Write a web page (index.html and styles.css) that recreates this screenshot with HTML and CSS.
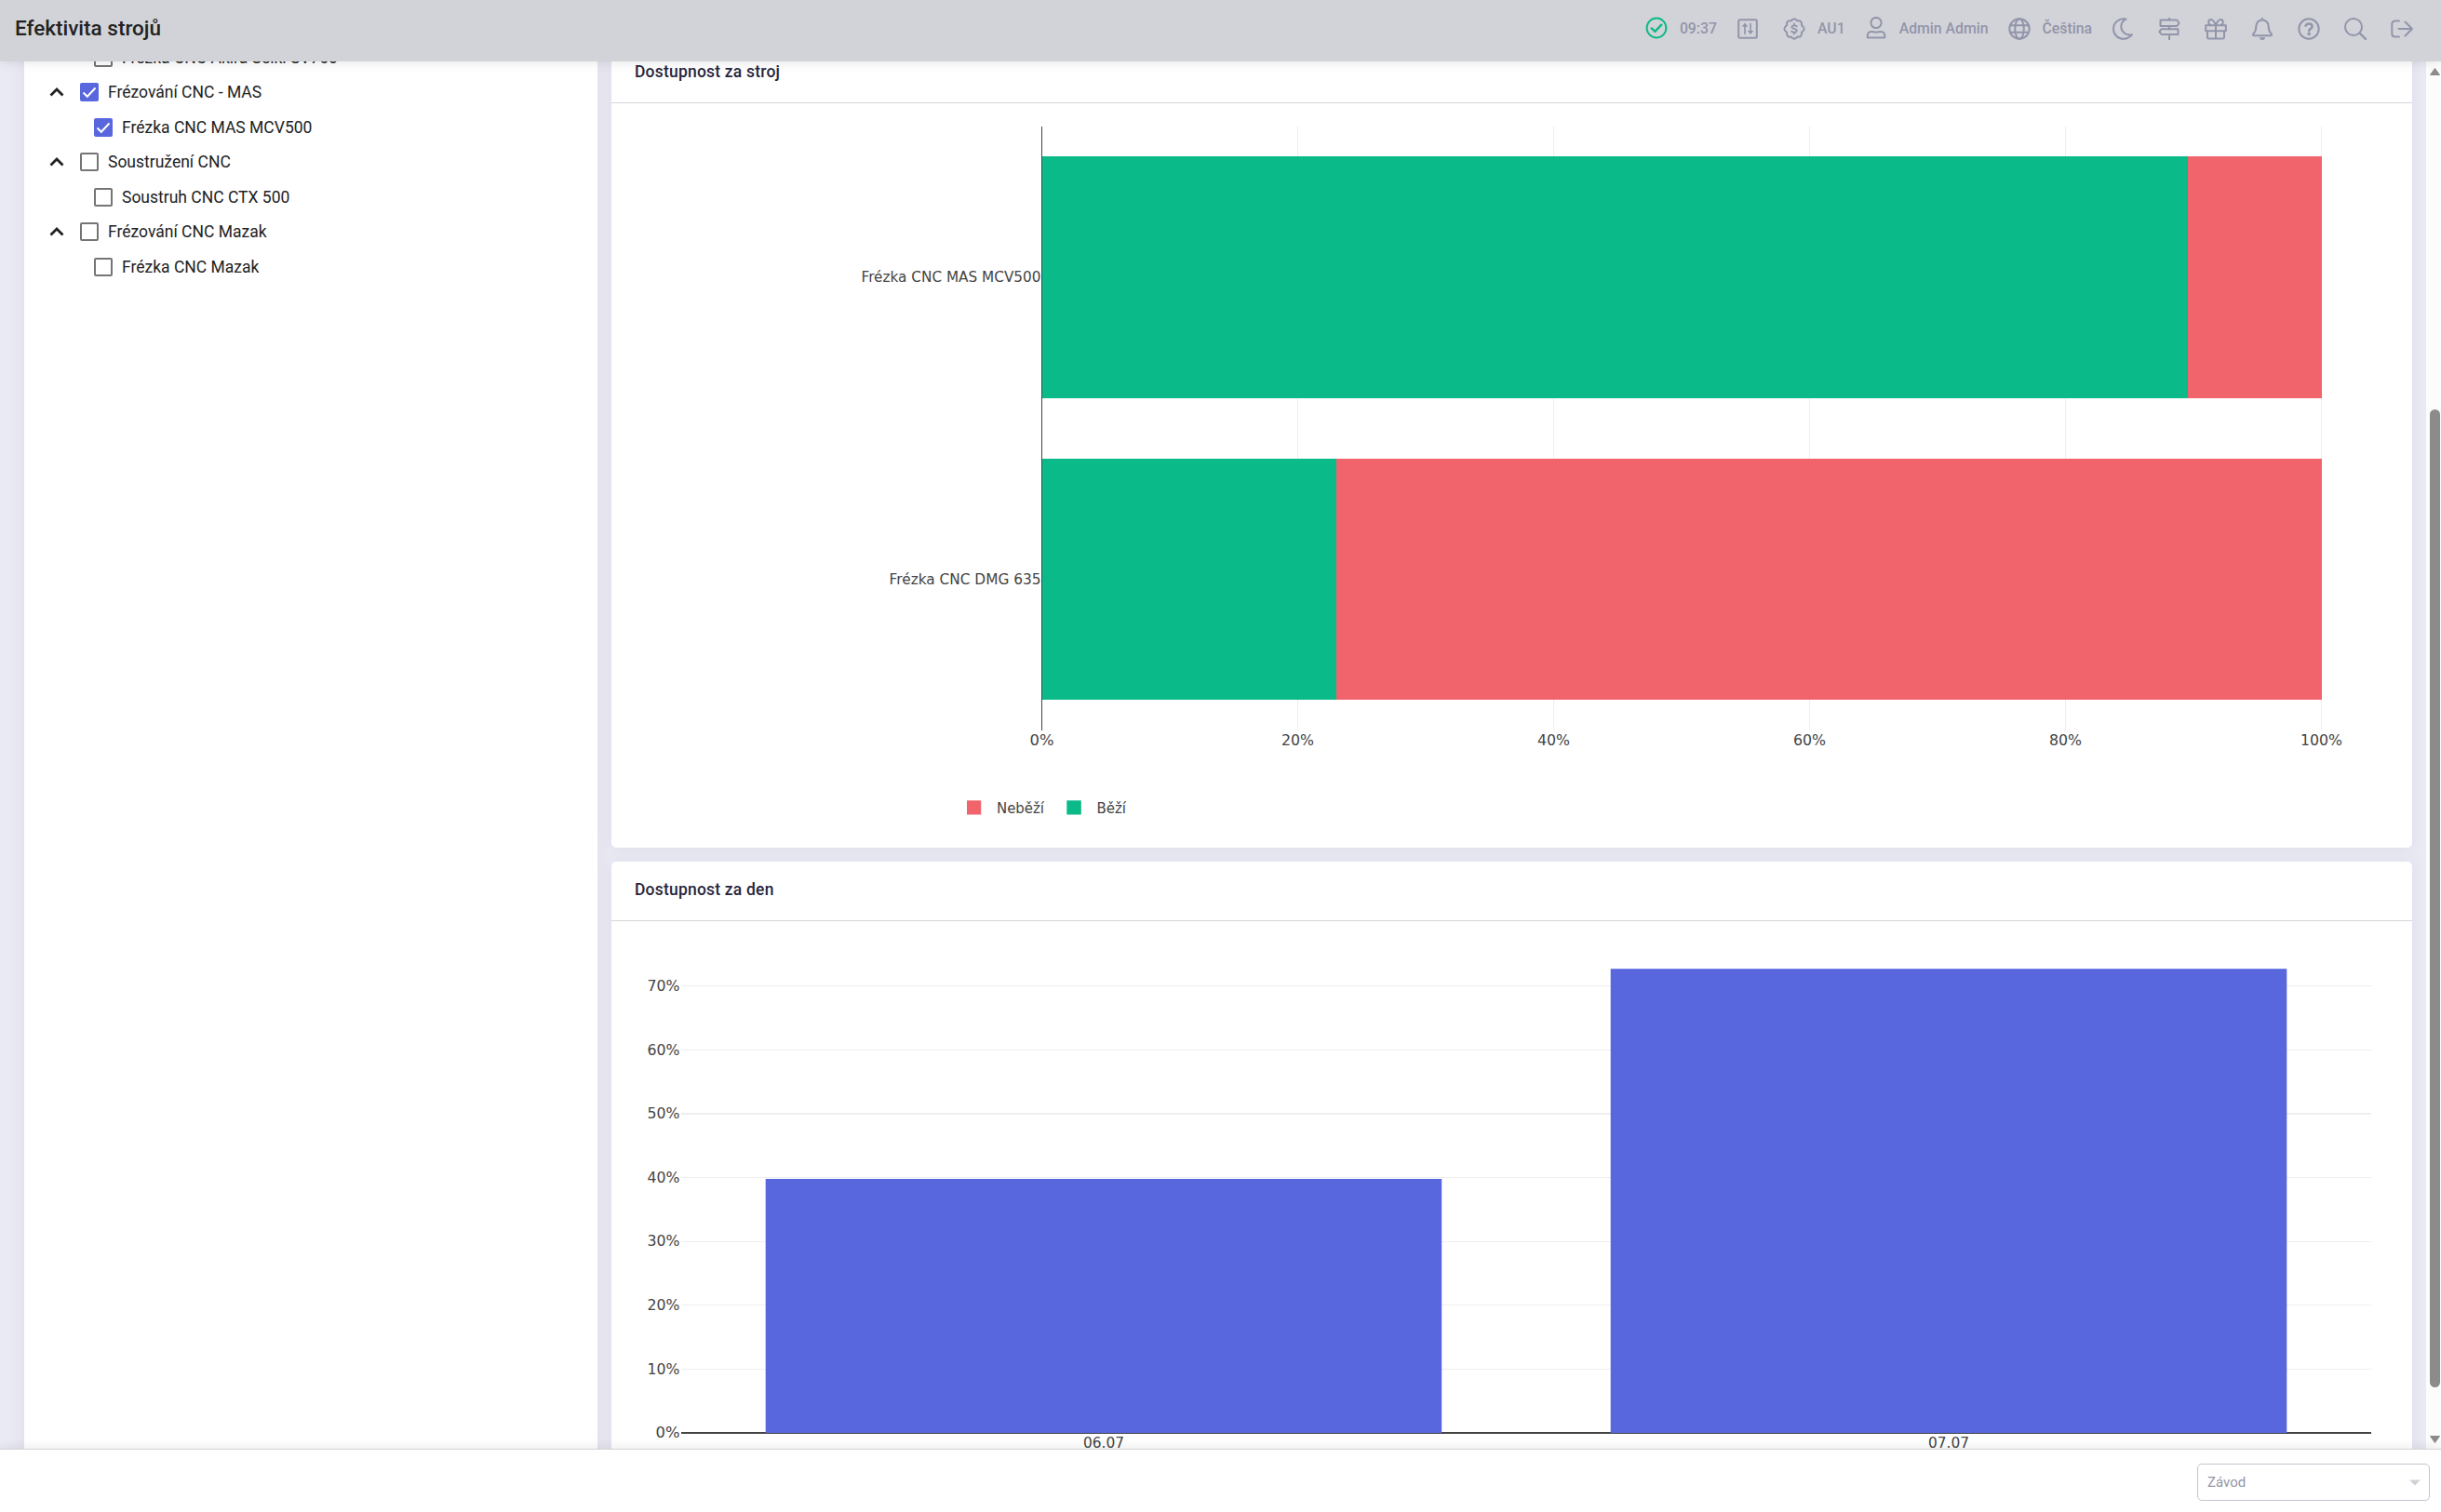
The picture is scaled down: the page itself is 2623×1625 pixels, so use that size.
FILE: index.html
```html
<!DOCTYPE html>
<html lang="cs">
<head>
    <meta charset="UTF-8">
    <meta name="viewport" content="width=device-width, initial-scale=1.0">
    <title>Efektivita strojů</title>
    <link rel="stylesheet" href="styles.css">
</head>
<body>
    <header class="topbar">
        <h1>Efektivita strojů</h1>
        <nav class="toolbar">
            <div class="tool">
                <svg class="icon ok" viewBox="0 0 24 24"><circle cx="12" cy="12" r="10.4"/><path d="M6.8 12.4l3.6 3.5 6.9-7.2" stroke-width="2.4"/></svg>
                <span>09:37</span>
            </div>
            <div class="tool">
                <svg class="icon" viewBox="0 0 24 24"><rect x="2.2" y="2.2" width="19.6" height="19.6" rx="1.5"/><path d="M9 17.500V8M15 6.500v9" stroke-width="1.600"/><path class="solid" d="M9 5.500l3.300 4.200H5.700zM15 18l-3.300-4h6.600z"/></svg>
            </div>
            <div class="tool">
                <svg class="icon" viewBox="0 0 24 24"><path d="M12 1.3c1.6 0 2.5 1 3.2 2.1 1.3-.3 2.8-.3 3.9.8s1.1 2.6.8 3.9C21 8.8 22.7 10.200 22.7 12s-1.600 3-2.800 3.800c.3 1.400.3 2.800-.8 3.900s-2.600 1.100-3.900.8C14.500 21.600 13.600 22.700 12 22.700s-2.500-1-3.200-2.200c-1.300.3-2.800.3-3.900-.8s-1.100-2.500-.8-3.900C2.900 15 1.300 13.800 1.300 12S3 8.800 4.100 8.100c-.3-1.300-.3-2.800.8-3.900s2.600-1.100 3.900-.8C9.500 2.300 10.400 1.300 12 1.300z"/><path d="M14.700 9.200c-.8-.7-1.700-.9-2.700-.9-1.500 0-2.600.6-2.600 1.800 0 2.600 5.300 1.100 5.300 3.800 0 1.200-1.200 1.800-2.700 1.800-1.100 0-2.100-.3-2.900-1M12 6.400v1.900M12 15.700v1.900" stroke-width="1.800"/></svg>
                <span>AU1</span>
            </div>
            <div class="tool">
                <svg class="icon user" viewBox="0 0 24 24"><circle cx="12" cy="6.500" r="5.600"/><path d="M2.700 21.900v-1.600c0-2.700 2.200-4.400 4.600-4.400 1.600 0 2.400.8 4.700.8s3.100-.8 4.700-.8c2.400 0 4.600 1.700 4.600 4.400v1.600c0 .4-.3.700-.7.700H3.400c-.4 0-.7-.3-.7-.7z"/></svg>
                <span>Admin Admin</span>
            </div>
            <div class="tool">
                <svg class="icon" viewBox="0 0 24 24"><circle cx="12" cy="12" r="10.700"/><ellipse cx="12" cy="12" rx="4.800" ry="10.700"/><path d="M2 8.200h20M2 15.800h20"/></svg>
                <span>Čeština</span>
            </div>
            <div class="tool"><svg class="icon" viewBox="0 0 24 24"><path d="M15.500 1.500C9 .2 2 4.600 2 12c0 6.200 4.900 10.800 10.800 10.800 3.700 0 7-1.700 9.200-4.600-6.800 1.300-11.700-3-11.700-8.600 0-3.300 1.800-6.200 5.200-8.100z"/></svg></div>
            <div class="tool"><svg class="icon" viewBox="0 0 24 24"><path d="M12 .5v2M12 9.500v3M12 18.500V24"/><path d="M2.500 2.500h17.800l2.300 3.300-2.300 3.200H2.500zM21.500 12.200H3.700l-2.300 2.900 2.300 2.900h17.800z"/></svg></div>
            <div class="tool"><svg class="icon" viewBox="0 0 24 24"><path d="M3 14.500v6.700c0 .7.500 1.300 1.300 1.300h15.400c.8 0 1.300-.6 1.300-1.300v-6.700M1.200 8.200h21.600v6H1.200zM12 8.200v14.300M12 8C10.500 4.500 9.300 2 7 2 5.300 2 4.200 3.200 4.200 4.800S5.300 8 7 8M12 8c1.500-3.500 2.700-6 5-6 1.700 0 2.800 1.200 2.800 2.800S18.700 8 17 8"/></svg></div>
            <div class="tool"><svg class="icon" viewBox="0 0 24 24"><path d="M12 .3v2.200M12 2.500c-4 0-6.700 3-6.700 6.900 0 5-1.300 6.300-3 8-.7.800-.3 1.900.8 1.900h17.800c1.100 0 1.500-1.100.8-1.900-1.700-1.700-3-3-3-8 0-3.900-2.700-6.900-6.700-6.900z"/><path class="solid" d="M8.900 21.200h6.200c0 1.600-1.300 2.800-3.100 2.800s-3.100-1.200-3.100-2.800z"/></svg></div>
            <div class="tool"><svg class="icon" viewBox="0 0 24 24"><circle cx="12" cy="12" r="10.700"/><path d="M8.500 8.700c.6-1.500 1.800-2.300 3.500-2.300 2.100 0 3.600 1.300 3.600 3 0 2.600-3.400 2.400-3.400 4.800" stroke-width="2.500"/><circle class="solid" cx="12.100" cy="17.500" r="1.800"/></svg></div>
            <div class="tool"><svg class="icon" viewBox="0 0 24 24"><circle cx="10" cy="10" r="9"/><path d="M16.500 16.500l6.500 6.500" stroke-width="2.300"/></svg></div>
            <div class="tool"><svg class="icon" viewBox="0 0 24 24"><path d="M9 20.500H4.500c-1.800 0-3.200-1.400-3.200-3.200V6.700c0-1.800 1.400-3.200 3.200-3.200H9M8.500 12h14.300M15.500 4.500L23 12l-7.500 7.500"/></svg></div>
        </nav>
    </header>

    <main class="content">
        <aside class="tree">
            <div class="row child"><span class="check"></span>Frézka CNC Akira Seiki SV760</div>
            <div class="row"><svg class="chevron" viewBox="0 0 16 10"><path d="M1.500 8.500L8 2l6.500 6.500"/></svg><span class="check checked"><svg viewBox="0 0 20 20"><path d="M3.500 10.500l4.300 4.200L16.500 5.500"/></svg></span>Frézování CNC - MAS</div>
            <div class="row child"><span class="check checked"><svg viewBox="0 0 20 20"><path d="M3.500 10.500l4.300 4.200L16.500 5.500"/></svg></span>Frézka CNC MAS MCV500</div>
            <div class="row"><svg class="chevron" viewBox="0 0 16 10"><path d="M1.500 8.500L8 2l6.500 6.500"/></svg><span class="check"></span>Soustružení CNC</div>
            <div class="row child"><span class="check"></span>Soustruh CNC CTX 500</div>
            <div class="row"><svg class="chevron" viewBox="0 0 16 10"><path d="M1.500 8.500L8 2l6.500 6.500"/></svg><span class="check"></span>Frézování CNC Mazak</div>
            <div class="row child"><span class="check"></span>Frézka CNC Mazak</div>
        </aside>

        <div class="cards">
            <section class="card">
                <h2>Dostupnost za stroj</h2>
                <svg class="chart" width="1935" height="800" viewBox="657 111 1935 800">
                    <g class="grid">
                        <path d="M1394.500 136v649M1669.500 136v649M1944.500 136v649M2219.500 136v649M2494.500 136v649"/>
                    </g>
                    <g class="running">
                        <rect x="1120" y="168" width="1231" height="260"/>
                        <rect x="1120" y="493" width="316" height="259"/>
                    </g>
                    <g class="stopped">
                        <rect x="2351" y="168" width="144" height="260"/>
                        <rect x="1436" y="493" width="1059" height="259"/>
                    </g>
                    <path class="axis" d="M1119.500 136v649"/>
                    <g class="label end">
                        <text x="1118.500" y="303" textLength="193" lengthAdjust="spacingAndGlyphs">Frézka CNC MAS MCV500</text>
                        <text x="1118.500" y="628" textLength="163" lengthAdjust="spacingAndGlyphs">Frézka CNC DMG 635</text>
                    </g>
                    <g class="label middle">
                        <text x="1119.500" y="801" textLength="26" lengthAdjust="spacingAndGlyphs">0%</text>
                        <text x="1394.500" y="801" textLength="35" lengthAdjust="spacingAndGlyphs">20%</text>
                        <text x="1669.500" y="801" textLength="35" lengthAdjust="spacingAndGlyphs">40%</text>
                        <text x="1944.500" y="801" textLength="35" lengthAdjust="spacingAndGlyphs">60%</text>
                        <text x="2219.500" y="801" textLength="35" lengthAdjust="spacingAndGlyphs">80%</text>
                        <text x="2494.500" y="801" textLength="45" lengthAdjust="spacingAndGlyphs">100%</text>
                    </g>
                    <rect class="stopped" x="1039" y="860.300" width="15.200" height="15.200"/>
                    <rect class="running" x="1146.300" y="860.300" width="15.500" height="15.200"/>
                    <g class="label">
                        <text x="1071" y="874" textLength="51" lengthAdjust="spacingAndGlyphs">Neběží</text>
                        <text x="1178.500" y="874" textLength="31.500" lengthAdjust="spacingAndGlyphs">Běží</text>
                    </g>
                </svg>
            </section>

            <section class="card">
                <h2>Dostupnost za den</h2>
                <svg class="chart" width="1935" height="610" viewBox="657 990 1935 610">
                    <g class="grid">
                        <path d="M732 1059.500H2548M732 1128.500H2548M732 1265.500H2548M732 1334.500H2548M732 1402.500H2548M732 1471.500H2548"/>
                        <path d="M732 1197H2548" stroke-width="2"/>
                    </g>
                    <path class="axis" d="M732 1540H2548" stroke-width="2"/>
                    <g class="day">
                        <rect x="822.700" y="1267" width="726.500" height="273"/>
                        <rect x="1730.700" y="1041.200" width="726.600" height="498.800"/>
                    </g>
                    <g class="label end">
                        <text x="730.500" y="1065" textLength="35" lengthAdjust="spacingAndGlyphs">70%</text>
                        <text x="730.500" y="1134" textLength="35" lengthAdjust="spacingAndGlyphs">60%</text>
                        <text x="730.500" y="1202" textLength="35" lengthAdjust="spacingAndGlyphs">50%</text>
                        <text x="730.500" y="1271" textLength="35" lengthAdjust="spacingAndGlyphs">40%</text>
                        <text x="730.500" y="1339" textLength="35" lengthAdjust="spacingAndGlyphs">30%</text>
                        <text x="730.500" y="1408" textLength="35" lengthAdjust="spacingAndGlyphs">20%</text>
                        <text x="730.500" y="1477" textLength="35" lengthAdjust="spacingAndGlyphs">10%</text>
                        <text x="730.500" y="1545" textLength="26" lengthAdjust="spacingAndGlyphs">0%</text>
                    </g>
                    <g class="label middle">
                        <text x="1186" y="1556" textLength="44" lengthAdjust="spacingAndGlyphs">06.07</text>
                        <text x="2094" y="1556" textLength="44" lengthAdjust="spacingAndGlyphs">07.07</text>
                    </g>
                </svg>
            </section>
        </div>

        <div class="scrollbar">
            <svg width="13" height="10" viewBox="0 0 13 10"><path d="M6.500 1.500l5 7h-10z"/></svg>
            <div class="thumb"></div>
            <svg width="13" height="10" viewBox="0 0 13 10"><path d="M6.500 8.500l5-7h-10z"/></svg>
        </div>
    </main>

    <footer class="bottombar">
        <div class="select">
            <span>Závod</span>
            <svg width="12" height="7" viewBox="0 0 12 7"><path d="M0 .5h12L6 6.500z"/></svg>
        </div>
    </footer>
</body>
</html>
```

FILE: styles.css
```css
* {
    box-sizing: border-box;
}

body {
    margin: 0;
    height: 1625px;
    display: flex;
    flex-direction: column;
    overflow: hidden;
    background-color: #eaeaf4;
    font-family: Roboto, sans-serif;
    color: #222;
}

/* top bar */
.topbar {
    height: 66px;
    flex: none;
    display: flex;
    justify-content: space-between;
    padding: 0 30px 0 16px;
    background-color: #d2d3d8;
    box-shadow: 0 0 12px rgba(0, 0, 0, 0.12);
    position: relative;
    z-index: 2;
}

.topbar h1 {
    margin: 0;
    font-size: 22.5px;
    font-weight: 500;
    line-height: 60px;
}

.toolbar {
    height: 62px;
    display: flex;
    align-items: center;
    gap: 26px;
    color: #9295aa;
    font-size: 15.8px;
    font-weight: 500;
}

.tool {
    display: flex;
    align-items: center;
    gap: 13px;
}

.tool span {
    line-height: 20px;
    margin: -1px -5px 0 0;
}

.icon {
    width: 24px;
    height: 24px;
    fill: none;
    stroke: currentColor;
    stroke-width: 2;
    stroke-linecap: round;
    stroke-linejoin: round;
}

.icon .solid {
    fill: currentColor;
    stroke: none;
}

.icon.ok {
    margin-bottom: 3px;
    color: #0aba88;
}

.icon.user {
    margin-bottom: 2px;
}

/* page content */
.content {
    height: 1491px;
    flex: none;
    display: flex;
    overflow: hidden;
    padding-left: 26px;
}

.tree {
    width: 616px;
    height: 1600px;
    margin-top: -36px;
    padding: 12.75px 0 0 26px;
    background-color: #fff;
    box-shadow: 0 0 16px rgba(82, 63, 105, 0.08);
    font-size: 17.5px;
}

.row {
    height: 37.5px;
    display: flex;
    align-items: center;
}

.row.child {
    padding-left: 49px;
}

.chevron {
    width: 16px;
    height: 10px;
    margin: 0 17px 0 1px;
    fill: none;
    stroke: #222;
    stroke-width: 2.8;
}

.check {
    width: 20px;
    height: 20px;
    margin-right: 10px;
    border: 2px solid #757575;
    border-radius: 2px;
}

.check.checked {
    border: none;
    background-color: #5867dd;
}

.check svg {
    display: block;
    fill: none;
    stroke: #fff;
    stroke-width: 2;
}

.cards {
    width: 1935px;
    margin: -19px 15px 0 15px;
    display: flex;
    flex-direction: column;
    gap: 15px;
}

.card {
    flex: none;
    background-color: #fff;
    border-radius: 5px;
    box-shadow: 0 0 16px rgba(82, 63, 105, 0.08);
}

.card h2 {
    height: 64px;
    margin: 0;
    padding-left: 25px;
    border-bottom: 1px solid #d5d5dc;
    font-size: 17.5px;
    font-weight: 500;
    line-height: 61px;
    letter-spacing: 0.2px;
    color: #27253c;
}

/* charts */
.chart {
    display: block;
}

.grid {
    stroke: #eee;
    fill: none;
    shape-rendering: crispEdges;
}

.axis {
    stroke: #444;
    fill: none;
    shape-rendering: crispEdges;
}

.running {
    fill: #0aba88;
}

.stopped {
    fill: #f1646c;
}

.day {
    fill: #5867dd;
}

.label {
    font-family: "DejaVu Sans", sans-serif;
    font-size: 15px;
    fill: #444;
}

.end {
    text-anchor: end;
}

.middle {
    text-anchor: middle;
}

/* scrollbar */
.scrollbar {
    width: 16px;
    padding: 6px 0 5px 2px;
    display: flex;
    flex-direction: column;
    align-items: center;
    background-color: #fcfcfc;
}

.scrollbar svg {
    flex: none;
    fill: #8b8b8b;
    stroke: #8b8b8b;
    stroke-linejoin: round;
}

.thumb {
    width: 11px;
    height: 1051px;
    margin: 358px 0 auto;
    border-radius: 6px;
    background-color: #8b8b8b;
}

/* bottom bar */
.bottombar {
    height: 68px;
    flex: none;
    display: flex;
    justify-content: flex-end;
    padding: 15px 12px 0 0;
    border-top: 1px solid #d4d4d8;
    background-color: #fff;
    box-shadow: 0 0 12px rgba(0, 0, 0, 0.1);
    position: relative;
}

.select {
    width: 250px;
    height: 40px;
    padding: 0 9px 0 10px;
    display: flex;
    align-items: center;
    justify-content: space-between;
    border: 1px solid #c4c5d0;
    border-radius: 5px;
    color: #9295aa;
    font-size: 15px;
}

.select svg {
    fill: #d0d1d8;
}
```
